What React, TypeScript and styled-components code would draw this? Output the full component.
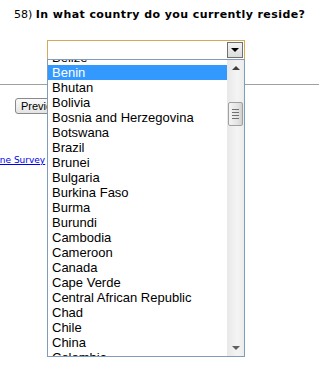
import React from 'react';
import styled, { createGlobalStyle } from 'styled-components';

const countries = [
  'Belize',
  'Benin',
  'Bhutan',
  'Bolivia',
  'Bosnia and Herzegovina',
  'Botswana',
  'Brazil',
  'Brunei',
  'Bulgaria',
  'Burkina Faso',
  'Burma',
  'Burundi',
  'Cambodia',
  'Cameroon',
  'Canada',
  'Cape Verde',
  'Central African Republic',
  'Chad',
  'Chile',
  'China',
  'Colombia',
];

const GlobalStyle = createGlobalStyle`
  html, body {
    margin: 0;
    padding: 0;
    background: #fff;
    overflow: hidden;
  }
`;

const Page = styled.div`
  position: relative;
  width: 319px;
  height: 374px;
  overflow: hidden;
  font-family: 'DejaVu Sans', Verdana, sans-serif;
`;

const Question = styled.div`
  padding: 8px 0 0 14px;
  height: 40px;
  box-sizing: border-box;
  font-size: 11px;
  color: #000;
  white-space: nowrap;

  b {
    font-weight: bold;
    letter-spacing: 0.42px;
  }
`;

const SelectWrap = styled.div`
  position: relative;
  margin-left: 47px;
  width: 198px;
`;

const SelectBox = styled.div`
  height: 20px;
  box-sizing: border-box;
  border: 1px solid #d6a956;
  display: flex;
  justify-content: flex-end;
  align-items: center;
  padding-right: 1px;
`;

const DropButton = styled.div`
  width: 16px;
  height: 16px;
  box-sizing: border-box;
  border: 1px solid #707070;
  background: linear-gradient(#f2f2f2, #dcdcdc);
  display: flex;
  align-items: center;
  justify-content: center;
`;

const Triangle = styled.div<{ $up?: boolean; $color?: string }>`
  width: 0;
  height: 0;
  border-left: 4px solid transparent;
  border-right: 4px solid transparent;
  ${(p) =>
    p.$up
      ? `border-bottom: 4px solid ${p.$color || '#000'};`
      : `border-top: 4px solid ${p.$color || '#000'};`}
`;

const DropList = styled.div`
  position: absolute;
  top: 19px;
  left: 0;
  width: 198px;
  height: 298px;
  box-sizing: border-box;
  border: 1px solid #7f9db9;
  background: #fff;
  display: flex;
  overflow: hidden;
  z-index: 2;
`;

const Options = styled.div`
  flex: 1;
  overflow: hidden;
`;

const OptionList = styled.div`
  margin-top: -10px;
`;

const Option = styled.div<{ $selected?: boolean }>`
  height: 15px;
  line-height: 15px;
  padding-left: 4px;
  font-family: 'Liberation Sans', Arial, sans-serif;
  font-size: 13px;
  white-space: nowrap;
  color: ${(p) => (p.$selected ? '#fff' : '#000')};
  background: ${(p) => (p.$selected ? '#3399ff' : 'transparent')};
`;

const Scrollbar = styled.div`
  width: 17px;
  background: linear-gradient(90deg, #e8e8e8, #f4f4f4 60%, #ececec);
  display: flex;
  flex-direction: column;
  align-items: center;
`;

const ScrollArrow = styled.div`
  height: 16px;
  width: 100%;
  display: flex;
  align-items: center;
  justify-content: center;
`;

const Track = styled.div`
  flex: 1;
  width: 100%;
  display: flex;
  flex-direction: column;
  align-items: center;
`;

const Thumb = styled.div`
  margin-top: 26px;
  width: 15px;
  height: 24px;
  box-sizing: border-box;
  border: 1px solid #a0a0a0;
  border-radius: 2px;
  background: linear-gradient(90deg, #f4f4f4, #e2e2e2 70%, #cfcfcf);
  display: flex;
  flex-direction: column;
  align-items: center;
  justify-content: center;
  gap: 2px;
`;

const Grip = styled.div`
  width: 7px;
  height: 1px;
  background: #707070;
`;

const Rule = styled.hr`
  margin: 24px 0 0;
  border: 0;
  border-top: 1px solid #a0a0a0;
  height: 0;
`;

const ButtonRow = styled.div`
  margin: 13px 0 0 15px;
  display: flex;
  gap: 8px;
`;

const NavButton = styled.button`
  height: 16px;
  padding: 0 5px;
  border: 1px solid #8a8a8a;
  border-radius: 3px;
  background: linear-gradient(#fafafa, #e4e4e4);
  font-family: 'Liberation Sans', Arial, sans-serif;
  font-size: 11px;
  line-height: 14px;
  color: #000;
`;

const SurveyLink = styled.a`
  display: block;
  margin: 41px 0 0 -18px;
  font-size: 9px;
  color: #0000ee;
  text-decoration: underline;
  white-space: nowrap;
`;

export default function App() {
  return (
    <Page>
      <GlobalStyle />
      <Question>
        58) <b>In what country do you currently reside?</b>
      </Question>
      <SelectWrap>
        <SelectBox>
          <DropButton>
            <Triangle />
          </DropButton>
        </SelectBox>
        <DropList>
          <Options>
            <OptionList>
              {countries.map((c) => (
                <Option key={c} $selected={c === 'Benin'}>
                  {c}
                </Option>
              ))}
            </OptionList>
          </Options>
          <Scrollbar>
            <ScrollArrow>
              <Triangle $up $color="#404040" />
            </ScrollArrow>
            <Track>
              <Thumb>
                <Grip />
                <Grip />
                <Grip />
                <Grip />
              </Thumb>
            </Track>
            <ScrollArrow>
              <Triangle $color="#606060" />
            </ScrollArrow>
          </Scrollbar>
        </DropList>
      </SelectWrap>
      <Rule />
      <ButtonRow>
        <NavButton>Previous</NavButton>
        <NavButton>Next</NavButton>
      </ButtonRow>
      <SurveyLink href="#">Online Survey</SurveyLink>
    </Page>
  );
}
